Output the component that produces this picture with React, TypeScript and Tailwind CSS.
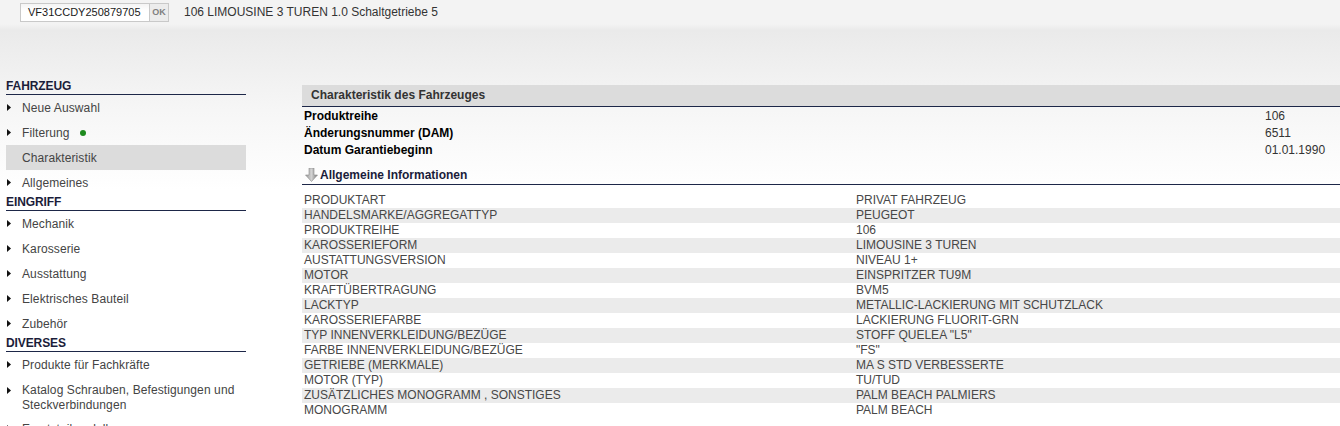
import React from 'react';

const NAV: { title: string; items: { label: string; lines?: string[]; active?: boolean; dot?: boolean }[] }[] = [
  {
    title: 'FAHRZEUG',
    items: [
      { label: 'Neue Auswahl' },
      { label: 'Filterung', dot: true },
      { label: 'Charakteristik', active: true },
      { label: 'Allgemeines' },
    ],
  },
  {
    title: 'EINGRIFF',
    items: [
      { label: 'Mechanik' },
      { label: 'Karosserie' },
      { label: 'Ausstattung' },
      { label: 'Elektrisches Bauteil' },
      { label: 'Zubehör' },
    ],
  },
  {
    title: 'DIVERSES',
    items: [
      { label: 'Produkte für Fachkräfte' },
      { label: 'Katalog Schrauben, Befestigungen und Steckverbindungen', lines: ['Katalog Schrauben, Befestigungen und', 'Steckverbindungen'] },
      { label: 'Ersatzteilmodelle' },
    ],
  },
];

const SUMMARY = [
  ['Produktreihe', '106'],
  ['Änderungsnummer (DAM)', '6511'],
  ['Datum Garantiebeginn', '01.01.1990'],
];

const INFO = [
  ['PRODUKTART', 'PRIVAT FAHRZEUG'],
  ['HANDELSMARKE/AGGREGATTYP', 'PEUGEOT'],
  ['PRODUKTREIHE', '106'],
  ['KAROSSERIEFORM', 'LIMOUSINE 3 TUREN'],
  ['AUSTATTUNGSVERSION', 'NIVEAU 1+'],
  ['MOTOR', 'EINSPRITZER TU9M'],
  ['KRAFTÜBERTRAGUNG', 'BVM5'],
  ['LACKTYP', 'METALLIC-LACKIERUNG MIT SCHUTZLACK'],
  ['KAROSSERIEFARBE', 'LACKIERUNG FLUORIT-GRN'],
  ['TYP INNENVERKLEIDUNG/BEZÜGE', 'STOFF QUELEA "L5"'],
  ['FARBE INNENVERKLEIDUNG/BEZÜGE', '"FS"'],
  ['GETRIEBE (MERKMALE)', 'MA S STD VERBESSERTE'],
  ['MOTOR (TYP)', 'TU/TUD'],
  ['ZUSÄTZLICHES MONOGRAMM , SONSTIGES', 'PALM BEACH PALMIERS'],
  ['MONOGRAMM', 'PALM BEACH'],
];

function Bullet() {
  return (
    <svg width="4" height="7" viewBox="0 0 4 7" className="shrink-0">
      <path d="M0 0 L4 3.5 L0 7 Z" fill="#111" />
    </svg>
  );
}

function DownArrow() {
  return (
    <svg width="13" height="14" viewBox="0 0 13 14" className="shrink-0">
      <defs>
        <linearGradient id="ag" x1="0" x2="1" y1="0" y2="0">
          <stop offset="0" stopColor="#9a9a9a" />
          <stop offset="0.5" stopColor="#d2d2d2" />
          <stop offset="1" stopColor="#7c7c7c" />
        </linearGradient>
      </defs>
      <path d="M4 0 H9 V7 H12.5 L6.5 13.5 L0.5 7 H4 Z" fill="url(#ag)" stroke="#8a8a8a" strokeWidth="0.6" />
    </svg>
  );
}

export default function App() {
  return (
    <div className="w-[1340px] h-[426px] overflow-hidden font-['Liberation_Sans',Arial,sans-serif] text-[12px] text-[#333] bg-[linear-gradient(#f3f3f3_0px,#f3f3f3_24px,#eaeaea_30px,#f6f6f6_110px,#ffffff_190px)]">
      {/* Top bar */}
      <div className="flex items-center h-[24px] pl-[20px]">
        <div className="flex h-[19px] border border-[#c9c9c9]">
          <div className="w-[128px] bg-[linear-gradient(#f4f4f4,#ffffff_40%)] pl-[7px] text-[11px] leading-[17px] text-[#1a1a1a]">VF31CCDY250879705</div>
          <div className="w-[19px] border-l border-[#c9c9c9] bg-[#ececec] text-center text-[9px] font-bold leading-[17px] text-[#808080]">OK</div>
        </div>
        <span className="ml-[15px] text-[#333]">106 LIMOUSINE 3 TUREN 1.0 Schaltgetriebe 5</span>
      </div>

      <div className="flex mt-[55px]">
        {/* Sidebar */}
        <div className="ml-[6px] w-[240px] shrink-0">
          {NAV.map((sec) => (
            <div key={sec.title}>
              <div className="h-[16px] leading-[15px] border-b border-[#1d2748] font-bold text-[#1b1d3a] tracking-[-0.1px]">{sec.title}</div>
              {sec.items.map((it) => (
                <div
                  key={it.label}
                  className={`flex ${it.lines ? 'items-start pt-[6px] pb-[3px]' : 'items-center h-[25px]'} pl-[1px] ${it.active ? 'bg-[#dcdcdc]' : ''} text-[#444] tracking-[0.1px]`}
                >
                  <div className={`w-[15px] flex ${it.lines ? 'pt-[4px]' : ''}`}>
                    {!it.active && <Bullet />}
                  </div>
                  {it.lines ? (
                    <div className="leading-[15px]">
                      {it.lines.map((l) => (
                        <div key={l}>{l}</div>
                      ))}
                    </div>
                  ) : (
                    <span>{it.label}</span>
                  )}
                  {it.dot && <span className="ml-[10px] w-[6px] h-[6px] rounded-full bg-[#1e8a1e]" />}
                </div>
              ))}
            </div>
          ))}
        </div>

        {/* Main */}
        <div className="ml-[56px] flex-1 pt-[6px]">
          <div className="h-[22px] bg-[#dcdcdc] border-b border-[#1d2748] pl-[9px] leading-[21px] font-bold text-[#333]">
            Charakteristik des Fahrzeuges
          </div>
          <div className="pt-[1px]">
            {SUMMARY.map(([k, v]) => (
              <div key={k} className="grid grid-cols-[961px_1fr] h-[17px] leading-[17px] pl-[2px]">
                <span className="font-bold text-black">{k}</span>
                <span className="text-[#333]">{v}</span>
              </div>
            ))}
          </div>
          <div className="mt-[6px] h-[20px] border-b border-[#1d2748] flex items-center gap-[2px] pl-[3px] font-bold text-[#1a1c3a]">
            <DownArrow />
            <span>Allgemeine Informationen</span>
          </div>
          <div className="mt-[8px]">
            {INFO.map(([k, v], i) => (
              <div key={k} className={`grid grid-cols-[552px_1fr] h-[15px] leading-[15px] pl-[2px] text-[#474747] ${i % 2 === 1 ? 'bg-[#ebebeb]' : ''}`}>
                <span>{k}</span>
                <span>{v}</span>
              </div>
            ))}
          </div>
        </div>
      </div>
    </div>
  );
}
